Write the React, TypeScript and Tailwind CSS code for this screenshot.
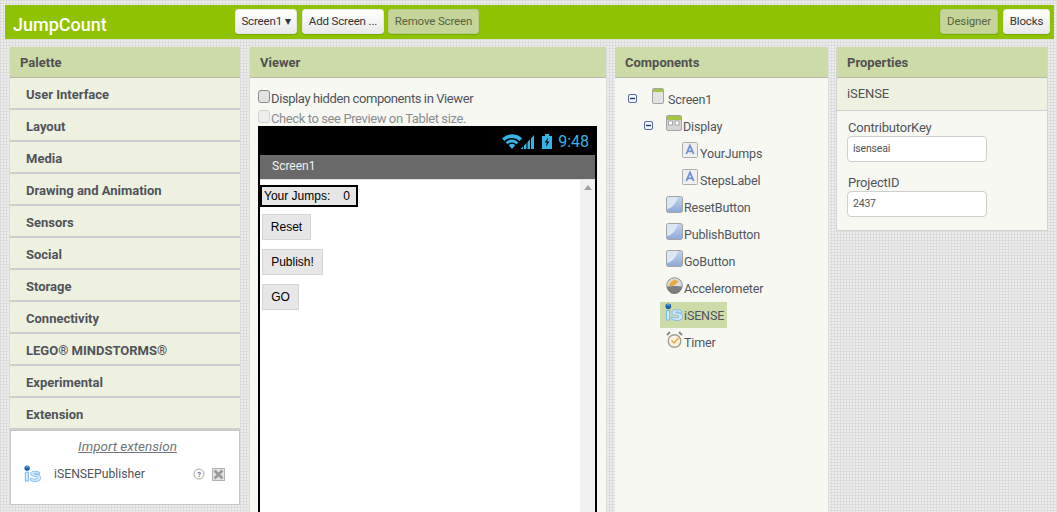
import React from "react";

const font = { fontFamily: "Roboto, 'Liberation Sans', sans-serif" };

function TopBtn({ children, off, w, cls = "" }: { children: React.ReactNode; off?: boolean; w: string; cls?: string }) {
  return (
    <div className={`${w} ${cls} h-[25px] flex items-center justify-center rounded-[3px] text-[11.5px] tracking-[-0.15px] shadow-[0_1px_1px_rgba(0,0,0,0.15)] ${off ? "bg-[#c5d59a] text-[#57633d] border border-[#b9cc8a]" : "bg-gradient-to-b from-white to-[#e9e9e9] text-[#333] border border-[#e6e6e6]"}`}>
      {children}
    </div>
  );
}

function Head({ children }: { children: React.ReactNode }) {
  return <div className="h-[31px] shrink-0 bg-[#cddba8] border-b border-[#b9b9a8] flex items-center pl-[10px] pt-[2px] text-[13px] font-bold text-[#505050]">{children}</div>;
}

function PalRow({ children }: { children: React.ReactNode }) {
  return <div className="h-[32px] shrink-0 bg-[#eef1e0] border-b-2 border-[#cfcfcf] flex items-center pl-[16px] pt-[3px] text-[13px] font-bold text-[#50535a]">{children}</div>;
}

function ISense({ w = 19, h = 19 }: { w?: number; h?: number }) {
  return (
    <svg width={w} height={h} viewBox="0 0 19 19" className="shrink-0 overflow-visible">
      <path d="M1.5 8 H5 V18 H1.5 Z" fill="#d3e9fb" stroke="#6eb4ee" strokeWidth="1" />
      <path d="M17.5 8.5 Q16 7 12 7 Q7.5 7 7.5 10 Q7.5 12.5 12 12.8 Q15 13 15 14.3 Q15 15.8 12 15.8 Q9 15.8 7.5 14.5 L7 17 Q9 18.5 12.5 18.5 Q18.5 18.5 18.5 14.2 Q18.5 11 13.5 10.6 Q11 10.4 11 9.8 Q11 9.2 13 9.4 Q15.5 9.5 17 11 Z" fill="#d3e9fb" stroke="#6eb4ee" strokeWidth="0.9" />
      <circle cx="3.5" cy="3.5" r="3" fill="#1d5fa8" />
      <path d="M2 2.5 Q3.5 1 5 2.5" fill="none" stroke="#9fd0f5" strokeWidth="1" />
    </svg>
  );
}

function BtnIcon() {
  return (
    <svg width="17" height="17" viewBox="0 0 17 17" className="shrink-0">
      <defs>
        <linearGradient id="bt" x1="0" y1="0" x2="0" y2="1">
          <stop offset="0" stopColor="#c5d6ee" />
          <stop offset="1" stopColor="#8aa8d8" />
        </linearGradient>
      </defs>
      <rect x="0.5" y="0.5" width="16" height="16" rx="2" fill="url(#bt)" stroke="#a3a3a3" />
      <path d="M1 13 C6 12 10 8 12 1 L2.5 1 Q1 1 1 2.5 Z" fill="#dbe7f5" />
    </svg>
  );
}

function LabelIcon() {
  return (
    <svg width="16" height="16" viewBox="0 0 16 16" className="shrink-0 mr-[1px]">
      <rect x="0.5" y="0.5" width="15" height="15" rx="1" fill="#efefef" stroke="#adadad" />
      <path d="M4.3 12 L8 3.5 L11.7 12 M5.6 9.3 H10.4" fill="none" stroke="#7090d2" strokeWidth="1.8" />
    </svg>
  );
}

function Minus() {
  return (
    <svg width="9" height="9" viewBox="0 0 9 9" className="shrink-0">
      <rect x="0.5" y="0.5" width="8" height="8" rx="1.5" fill="#f4f6fb" stroke="#5468ae" />
      <rect x="2" y="3.8" width="5" height="1.4" fill="#26357e" />
    </svg>
  );
}

function ScreenIcon() {
  return (
    <svg width="12" height="16" viewBox="0 0 12 16" className="shrink-0 mr-[3px]">
      <rect x="0.5" y="0.5" width="11" height="15" rx="1.5" fill="#e3e3e3" stroke="#a5a5a5" />
      <rect x="1" y="1" width="10" height="3" fill="#a6c545" />
    </svg>
  );
}

function DisplayIcon() {
  return (
    <svg width="16" height="16" viewBox="0 0 16 16" className="shrink-0">
      <rect x="0.5" y="0.5" width="15" height="15" rx="1.5" fill="#d6d6d6" stroke="#a5a5a5" />
      <rect x="1" y="1" width="14" height="4" fill="#a6c545" />
      <rect x="2.5" y="6" width="4" height="4" fill="#fff" stroke="#8a8a8a" strokeWidth="0.7" />
      <rect x="9" y="6" width="4" height="4" fill="#fff" stroke="#8a8a8a" strokeWidth="0.7" />
    </svg>
  );
}

function AccelIcon() {
  return (
    <svg width="17" height="17" viewBox="0 0 17 17" className="shrink-0">
      <circle cx="8.5" cy="8.5" r="7.8" fill="#dcdcdc" stroke="#8f8f8f" />
      <path d="M1 9.5 A7.5 7.5 0 0 0 16 9.5 L9 9 Z" fill="#7d7d7d" />
      <path d="M3.5 9 A5.5 5.5 0 0 1 11 3.5 L12.5 5 L7 9 Z" fill="#e9a93c" />
    </svg>
  );
}

function TimerIcon() {
  return (
    <svg width="17" height="17" viewBox="0 0 17 17" className="shrink-0">
      <path d="M1 4 L4 1 M16 4 L13 1" stroke="#8a8a8a" strokeWidth="2" />
      <circle cx="8.5" cy="10" r="6.3" fill="#fbf3e0" stroke="#a5a08e" strokeWidth="1.4" />
      <path d="M5.5 9.5 L8 12 L12.5 7" fill="none" stroke="#eea34a" strokeWidth="1.5" />
    </svg>
  );
}

function TreeRow({ icon, label, indent, minus, sel }: { icon: React.ReactNode; label: string; indent: string; minus?: string; sel?: boolean }) {
  return (
    <div className={`h-[27px] flex items-center ${indent}`}>
      {minus && <div className={minus}><Minus /></div>}
      <div className={`flex items-center h-[26px] ${sel ? "bg-[#cddba8] pr-[3px] pl-[5px]" : ""}`}>
        <div className="-mt-[5px]">{icon}</div>
        <span className="ml-[1px] mt-[2px] text-[12.5px] tracking-[-0.15px] text-[#4f545c] leading-[16px]">{label}</span>
      </div>
    </div>
  );
}

export default function App() {
  return (
    <div style={font} className="h-[512px] w-[1057px] overflow-hidden bg-[#eeeeee] bg-[linear-gradient(#dcdcdc_1px,transparent_1px),linear-gradient(90deg,#dcdcdc_1px,transparent_1px)] bg-[length:3px_3px] pt-[5px]">
      <header className="ml-[5px] w-[1049px] h-[34px] bg-[#8fc202] flex items-center">
        <div className="w-[230px] pl-[8px] pt-[4px] text-[18px] font-medium text-white">JumpCount</div>
        <div className="flex gap-[5px] -mt-[1px]">
          <TopBtn w="w-[62px]">Screen1 ▾</TopBtn>
          <TopBtn w="w-[82px]">Add Screen ...</TopBtn>
        </div>
        <TopBtn off w="w-[91px]" cls="ml-[4px] -mt-[1px]">Remove Screen</TopBtn>
        <div className="ml-auto mr-[4px] flex gap-[5px] -mt-[1px]">
          <TopBtn off w="w-[58px]">Designer</TopBtn>
          <TopBtn w="w-[47px]">Blocks</TopBtn>
        </div>
      </header>

      <main className="flex items-start pt-[8px] pl-[10px]">
        <section className="w-[230px] shrink-0 flex flex-col h-[457px]">
          <Head>Palette</Head>
          {["User Interface", "Layout", "Media", "Drawing and Animation", "Sensors", "Social", "Storage", "Connectivity", "LEGO® MINDSTORMS®", "Experimental", "Extension"].map((t) => (
            <PalRow key={t}>{t}</PalRow>
          ))}
          <div className="h-[75px] shrink-0 bg-white border border-[#c6c6c6] flex flex-col">
            <div className="mt-[6px] pl-[5px] text-center text-[13.5px] italic underline text-[#70757a] leading-[18px]">Import extension</div>
            <div className="flex items-center pl-[13px] mt-[8px] h-[20px]">
              <ISense w={17} h={17} />
              <span className="ml-[13px] text-[12.2px] text-[#50535a] mt-[1px] leading-[16px]">iSENSEPublisher</span>
              <svg width="12" height="12" viewBox="0 0 12 12" className="ml-[48px] mt-[2px]">
                <circle cx="6" cy="6" r="5" fill="#fff" stroke="#a8a8a8" />
                <text x="6" y="8.6" textAnchor="middle" fontSize="7.5" fontWeight="700" fill="#777" fontFamily="Roboto, sans-serif">?</text>
              </svg>
              <svg width="13" height="13" viewBox="0 0 13 13" className="ml-[7px] mt-[2px]">
                <rect x="0.5" y="0.5" width="12" height="12" fill="#e4e4e4" stroke="#b0b0b0" />
                <path d="M2.5 2.5 L10.5 10.5 M10.5 2.5 L2.5 10.5" stroke="#9a9a9a" strokeWidth="2.6" />
              </svg>
            </div>
          </div>
        </section>

        <section className="ml-[10px] w-[356px] shrink-0 h-[470px] flex flex-col bg-[#f7f8f2]">
          <Head>Viewer</Head>
          <div className="pl-[8px] pt-[12px] h-[48px] shrink-0 text-[13px] tracking-[-0.4px]">
            <div className="flex items-start h-[20px] text-[#50535a]">
              <span className="w-[12px] h-[13px] mr-[1px] rounded-[3px] border border-[#8a8a8a] bg-[#e2e2e2]" />
              <span className="leading-[18px]">Display hidden components in Viewer</span>
            </div>
            <div className="flex items-start h-[20px] text-[#8a8d90]">
              <span className="w-[12px] h-[13px] mr-[1px] rounded-[3px] border border-[#d2d2d2] bg-[#eeeeee]" />
              <span className="leading-[18px]">Check to see Preview on Tablet size.</span>
            </div>
          </div>
          <div className="ml-[8px] w-[339px] flex-1 border-x-2 border-black">
            <div className="h-[29px] bg-black -mx-[2px] flex items-center justify-end pr-[8px] text-[#33b5e5]">
              <svg width="33" height="15" viewBox="0 0 33 15" className="mt-[2px] mr-[7px]">
                <path d="M0 4.5 A14 14 0 0 1 20 4.5 L17.6 7 A11 11 0 0 0 2.4 7 Z" fill="#33b5e5" />
                <path d="M3.6 8.2 A9 9 0 0 1 16.4 8.2 L14.4 10.2 A6.5 6.5 0 0 0 5.6 10.2 Z" fill="#33b5e5" />
                <path d="M6.7 11.3 A5 5 0 0 1 13.3 11.3 L10 15 Z" fill="#33b5e5" />
                <path d="M18.5 15 L21 12.5 V15 Z M22 15 V11.5 L24.5 9 V15 Z M25.5 15 V8 L28 5.5 V15 Z M29 15 V4.5 L32 1 V15 Z" fill="#33b5e5" />
              </svg>
              <svg width="10" height="15" viewBox="0 0 10 15" className="mt-[2px] mr-[6px]">
                <rect x="3" y="0" width="4" height="2" fill="#33b5e5" />
                <rect x="0" y="2" width="10" height="13" fill="#33b5e5" />
                <path d="M6.2 3.5 L2.8 8.5 H4.8 L3.8 13 L7.4 7.5 H5.2 Z" fill="#000" />
              </svg>
              <span className="text-[16px] pt-[2px]">9:48</span>
            </div>
            <div className="h-[24px] bg-[#696969] flex items-center pl-[12px] pb-[2px] text-[12px] text-[#f2f2f2]">Screen1</div>
            <div className="h-full bg-white flex border-t border-[#e2e2e2]">
              <div className="flex-1 flex flex-col items-start">
                <div className="mt-[5px] h-[22px] w-[98px] border-2 border-black bg-[#e6e6e6] flex items-center pl-[2px] text-[12px] text-black font-['Liberation_Sans']">
                  <span>Your Jumps:</span>
                  <span className="ml-[13px]">0</span>
                </div>
                {[
                  ["Reset", "w-[49px]", "mt-[7px]"],
                  ["Publish!", "w-[61px]", "mt-[9px]"],
                  ["GO", "w-[37px]", "mt-[9px]"],
                ].map(([t, w, m]) => (
                  <div key={t} className={`${w} ${m} ml-[2px] h-[26px] bg-[#e7e7e7] border border-[#d4d4d4] flex items-center justify-center text-[12px] text-black font-['Liberation_Sans']`}>{t}</div>
                ))}
              </div>
              <div className="w-[15px] bg-[#f1f1f1] flex justify-center pt-[5px]">
                <div className="w-0 h-0 border-x-[4px] border-x-transparent border-b-[5px] border-b-[#a3a3a3]" />
              </div>
            </div>
          </div>
        </section>

        <section className="ml-[9px] w-[213px] shrink-0 h-[470px] flex flex-col bg-[#f7f8f2]">
          <Head>Components</Head>
          <div className="pt-[7px] text-[13px]">
            <TreeRow indent="pl-[13px]" minus="w-[24px]" icon={<ScreenIcon />} label="Screen1" />
            <TreeRow indent="pl-[29px]" minus="w-[22px]" icon={<DisplayIcon />} label="Display" />
            <TreeRow indent="pl-[67px]" icon={<LabelIcon />} label="YourJumps" />
            <TreeRow indent="pl-[67px]" icon={<LabelIcon />} label="StepsLabel" />
            <TreeRow indent="pl-[51px]" icon={<BtnIcon />} label="ResetButton" />
            <TreeRow indent="pl-[51px]" icon={<BtnIcon />} label="PublishButton" />
            <TreeRow indent="pl-[51px]" icon={<BtnIcon />} label="GoButton" />
            <TreeRow indent="pl-[51px]" icon={<AccelIcon />} label="Accelerometer" />
            <TreeRow indent="pl-[45px]" sel icon={<ISense w={18} h={18} />} label="iSENSE" />
            <TreeRow indent="pl-[51px]" icon={<TimerIcon />} label="Timer" />
          </div>
        </section>

        <section className="ml-[8px] w-[212px] shrink-0 flex flex-col bg-[#f7f8f2] border-b border-x border-[#d4d4d4] h-[184px]">
          <Head>Properties</Head>
          <div className="h-[33px] bg-[#eef1e0] border-b border-[#cfcfcf] flex items-center pl-[10px] text-[13px] tracking-[-0.1px] text-[#50535a]">iSENSE</div>
          <div className="pl-[10px] pt-[9px] text-[13px] tracking-[-0.2px] text-[#50535a]">
            <div className="leading-[16px] pl-[1px]">ContributorKey</div>
            <div className="w-[140px] h-[26px] rounded-[4px] bg-white border border-[#cfcfcf] flex items-center pl-[5px] text-[10.5px]">isenseai</div>
            <div className="mt-[13px] leading-[16px] pl-[1px]">ProjectID</div>
            <div className="w-[140px] h-[26px] rounded-[4px] bg-white border border-[#cfcfcf] flex items-center pl-[5px] text-[10.5px]">2437</div>
          </div>
        </section>
      </main>
    </div>
  );
}
